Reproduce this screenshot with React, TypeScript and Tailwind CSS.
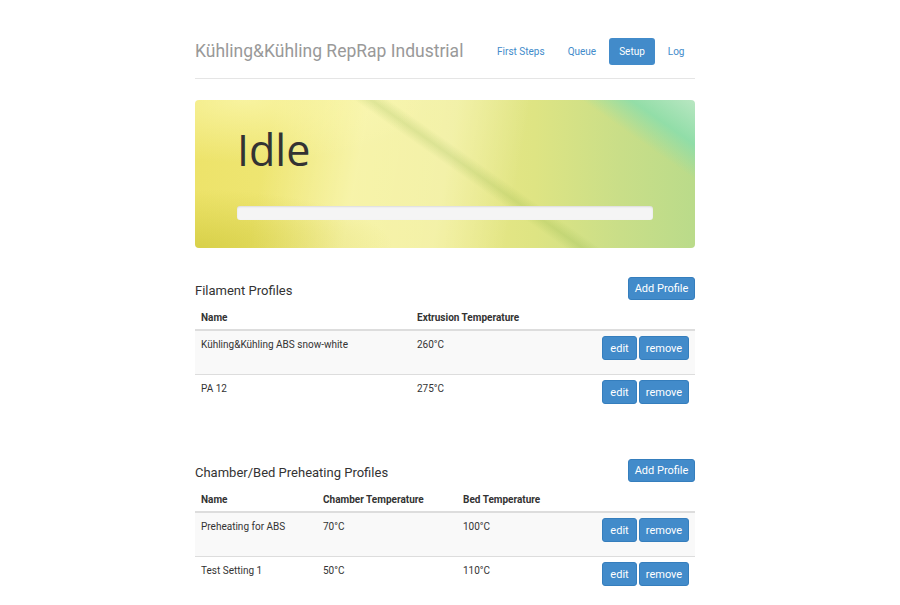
const blue = "bg-[#428bca] text-white rounded-[3px] border border-[#357ebd]";

function Btn({ children, className }: { children: React.ReactNode; className?: string }) {
  return (
    <button className={`${blue} text-[11px] leading-none flex items-center justify-center ${className ?? ""}`}>
      {children}
    </button>
  );
}

function Actions() {
  return (
    <div className="flex justify-end gap-[2px] pt-[5px] pr-[6px]">
      <Btn className="w-[35px] h-[24px]">edit</Btn>
      <Btn className="w-[50px] h-[24px]">remove</Btn>
    </div>
  );
}

type Row = string[];

function ProfileTable({ title, cols, headers, rows }: { title: string; cols: string; headers: string[]; rows: Row[] }) {
  return (
    <section>
      <div className="flex justify-between items-end">
        <h4 className="text-[13px] leading-[16px] pb-[1px]">{title}</h4>
        <Btn className="w-[67px] h-[23px]">Add Profile</Btn>
      </div>
      <div className="mt-[5px] text-[10px]">
        <div className={`grid ${cols} h-[26px] items-center border-b-2 border-[#ddd] font-bold`}>
          {headers.map((h) => (
            <div key={h} className="px-[6px] pt-[1px]">{h}</div>
          ))}
          <div />
        </div>
        {rows.map((r, i) => (
          <div
            key={i}
            className={`grid ${cols} h-[43px] ${i > 0 ? "border-t border-[#ddd]" : "h-[42px]"} ${i % 2 === 0 ? "bg-[#f9f9f9]" : "bg-white"}`}
          >
            {r.map((c, j) => (
              <div key={j} className="px-[6px] pt-[7px] leading-[14px]">{c}</div>
            ))}
            <Actions />
          </div>
        ))}
      </div>
    </section>
  );
}

export default function App() {
  return (
    <div className="min-h-screen bg-white font-['Roboto',sans-serif] text-[#333]">
      <div className="w-[500px] ml-[195px] pt-[38px] pb-[40px]">
        <header className="flex justify-between items-center pb-[13px] border-b border-[#e5e5e5]">
          <h3 className="text-[17.5px] text-[#999] leading-none pt-[1px]">Kühling&amp;Kühling RepRap Industrial</h3>
          <nav className="flex gap-[2px] text-[10px] text-[#428bca]">
            <a className="px-[10.5px] h-[27px] flex items-center">First Steps</a>
            <a className="px-[10.5px] h-[27px] flex items-center">Queue</a>
            <a className="px-[10.5px] h-[27px] flex items-center bg-[#428bca] text-white rounded-[3px]">Setup</a>
            <a className="px-[10.5px] h-[27px] flex items-center">Log</a>
          </nav>
        </header>

        <div className="mt-[21px] h-[148px] rounded-[4px] overflow-hidden pl-[42px] pr-[42px] pt-[26px] bg-[linear-gradient(35deg,rgba(130,222,175,0)_84%,rgba(130,222,178,0.75)_91%,rgba(185,232,200,0.9)_100%),linear-gradient(35deg,rgba(110,160,50,0)_52%,rgba(110,160,50,0.18)_54.5%,rgba(110,160,50,0)_57%),radial-gradient(ellipse_at_0%_100%,rgba(195,190,40,0.5),rgba(195,190,40,0)_28%),radial-gradient(ellipse_at_10%_0%,rgba(255,252,190,0.6),rgba(255,252,190,0)_30%),linear-gradient(100deg,rgba(255,255,215,0)_15%,rgba(255,255,215,0.5)_33%,rgba(255,255,220,0.4)_50%,rgba(255,255,220,0)_64%),linear-gradient(90deg,#ede36a_0%,#efe87a_30%,#ebe886_50%,#dee483_68%,#c9de88_85%,#badb8a_100%)]">
          <h1 className="font-['Open_Sans',sans-serif] text-[43px] leading-[48px] text-[#333]">Idle</h1>
          <div className="mt-[32px] h-[14px] rounded-[3px] bg-[#f5f5f5] shadow-[inset_0_1px_2px_rgba(0,0,0,0.1)]" />
        </div>

        <div className="mt-[29px]">
          <ProfileTable
            title="Filament Profiles"
            cols="grid-cols-[216px_1fr_100px]"
            headers={["Name", "Extrusion Temperature"]}
            rows={[
              ["Kühling&Kühling ABS snow-white", "260°C"],
              ["PA 12", "275°C"],
            ]}
          />
        </div>

        <div className="mt-[42px]">
          <ProfileTable
            title="Chamber/Bed Preheating Profiles"
            cols="grid-cols-[122px_140px_1fr_100px]"
            headers={["Name", "Chamber Temperature", "Bed Temperature"]}
            rows={[
              ["Preheating for ABS", "70°C", "100°C"],
              ["Test Setting 1", "50°C", "110°C"],
            ]}
          />
        </div>
      </div>
    </div>
  );
}
